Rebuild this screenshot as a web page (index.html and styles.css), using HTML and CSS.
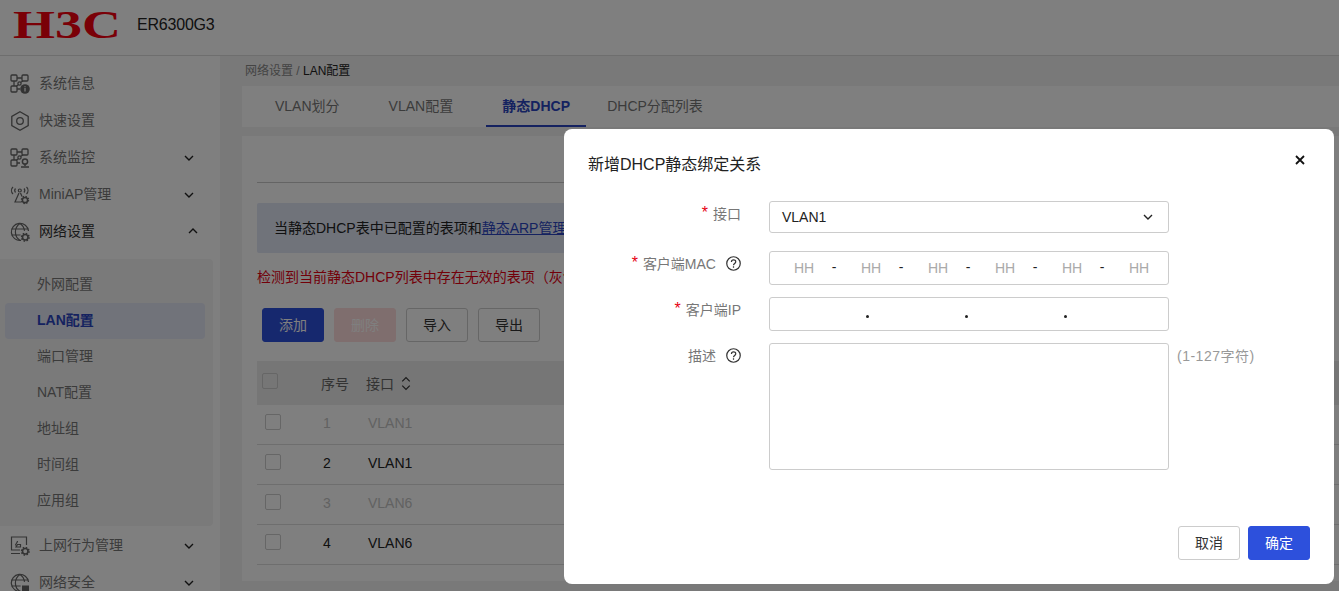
FILE: index.html
```html
<!DOCTYPE html>
<html lang="en">
<head>
  <meta charset="UTF-8" />
  <meta name="viewport" content="width=device-width, initial-scale=1.0" />
  <title>ER6300G3</title>
  <link rel="stylesheet" href="styles.css">
</head>
<body>
  <svg class="defs" width="0" height="0">
    <symbol id="gear" viewBox="0 0 10 10">
      <circle cx="5" cy="5" r="2.9" fill="none" stroke="currentColor" stroke-width="1.7"/>
      <circle cx="5" cy="5" r="4" fill="none" stroke="currentColor" stroke-width="1.6" stroke-dasharray="1.6 1.54"/>
    </symbol>
    <symbol id="nodes" viewBox="0 0 20 20">
      <g fill="none" stroke="currentColor" stroke-width="1.3">
        <rect x="1" y="1" width="6" height="6" rx="1"/>
        <rect x="12" y="1" width="6" height="6" rx="1"/>
        <rect x="1" y="12" width="6" height="6" rx="1"/>
        <circle cx="9.5" cy="9.5" r="1.6"/>
        <path d="M7 4h5M4 7v5M8.3 10.8L6 12.5M10.8 8.3L13 7M7 15h3"/>
      </g>
    </symbol>
    <symbol id="globe" viewBox="0 0 20 20">
      <g fill="none" stroke="currentColor" stroke-width="1.2">
        <path d="M11 18.4A8.6 8.6 0 1 1 18.5 9"/>
        <path d="M10 1.4C6 4 5.4 7 5.4 10s.8 6 4.6 8.4M10 1.4c3 2 4.3 4.5 4.5 7.5M1.6 7h16M1.6 13h9"/>
      </g>
    </symbol>
  </svg>

  <header class="topbar">
    <svg class="logo" width="112" height="50" viewBox="0 0 112 50">
      <text x="1" y="38" textLength="108" lengthAdjust="spacingAndGlyphs">H3C</text>
    </svg>
    <span class="model">ER6300G3</span>
  </header>

  <div class="layout">
    <nav class="sidebar">
      <div class="menu-item">
        <svg class="menu-icon" viewBox="0 0 20 20">
          <use href="#nodes"/>
          <circle cx="15" cy="15" r="4.8" fill="currentColor"/>
          <path d="M15 14v3.4M15 12.2v1" stroke="#fff" stroke-width="1.2"/>
        </svg>
        <span>系统信息</span>
      </div>
      <div class="menu-item">
        <svg class="menu-icon" viewBox="0 0 20 20" fill="none" stroke="currentColor" stroke-width="1.3">
          <path d="M10 .8l8.2 4.6v9.2L10 19.2l-8.2-4.6V5.4z"/>
          <circle cx="10" cy="10" r="3.3"/>
        </svg>
        <span>快速设置</span>
      </div>
      <div class="menu-item">
        <svg class="menu-icon" viewBox="0 0 20 20">
          <use href="#nodes"/>
          <circle cx="15" cy="13.5" r="2.6" fill="none" stroke="currentColor" stroke-width="1.5"/>
          <path d="M15 16v2M11 19h8" stroke="currentColor" stroke-width="1.5"/>
        </svg>
        <span>系统监控</span>
        <svg class="chevron" viewBox="0 0 10 6"><path d="M1 1l4 4 4-4"/></svg>
      </div>
      <div class="menu-item">
        <svg class="menu-icon" viewBox="0 0 20 20" fill="none" stroke="currentColor" stroke-width="1.2">
          <path d="M3 2C1 4 1 7 3 9M5.5 3.5C4.5 4.700 4.500 6.300 5.500 7.500M16.500 2c2 2 2 5 0 7M14 3.500c1 1.200 1 2.800 0 4"/>
          <circle cx="9.800" cy="5.500" r="1.500"/>
          <path d="M9 8L5 17h6M10.500 8l1.500 3.500"/>
          <use href="#gear" x="10.500" y="10.500" width="9" height="9"/>
        </svg>
        <span>MiniAP管理</span>
        <svg class="chevron" viewBox="0 0 10 6"><path d="M1 1l4 4 4-4"/></svg>
      </div>
      <div class="menu-item menu-open">
        <svg class="menu-icon" viewBox="0 0 20 20">
          <use href="#globe"/>
          <use href="#gear" x="10.500" y="10.500" width="9.500" height="9.500"/>
        </svg>
        <span>网络设置</span>
        <svg class="chevron chevron-up" viewBox="0 0 10 6"><path d="M1 5l4-4 4 4"/></svg>
      </div>

      <div class="submenu">
        <div class="sub-item">外网配置</div>
        <div class="sub-item sub-active">LAN配置</div>
        <div class="sub-item">端口管理</div>
        <div class="sub-item">NAT配置</div>
        <div class="sub-item">地址组</div>
        <div class="sub-item">时间组</div>
        <div class="sub-item">应用组</div>
      </div>

      <div class="menu-item">
        <svg class="menu-icon" viewBox="0 0 20 20" fill="none" stroke="currentColor" stroke-width="1.2">
          <path d="M10 14H1.500V1h15v8M1 17.500h9"/>
          <path d="M5.500 9.500c0-2 2-2.500 2-4.500M7.500 8.500h3V11H6z"/>
          <use href="#gear" x="10.500" y="10.500" width="9.500" height="9.500"/>
        </svg>
        <span>上网行为管理</span>
        <svg class="chevron" viewBox="0 0 10 6"><path d="M1 1l4 4 4-4"/></svg>
      </div>
      <div class="menu-item">
        <svg class="menu-icon" viewBox="0 0 20 20">
          <use href="#globe"/>
          <rect x="12" y="12.500" width="7" height="6" fill="currentColor"/>
        </svg>
        <span>网络安全</span>
        <svg class="chevron" viewBox="0 0 10 6"><path d="M1 1l4 4 4-4"/></svg>
      </div>
    </nav>

    <main class="main">
      <div class="breadcrumb">网络设置 / <b>LAN配置</b></div>
      <div class="tabs">
        <div class="tab">VLAN划分</div>
        <div class="tab">VLAN配置</div>
        <div class="tab tab-active">静态DHCP</div>
        <div class="tab">DHCP分配列表</div>
      </div>
      <section class="card">
        <div class="card-line"></div>
        <div class="notice">当静态DHCP表中已配置的表项和<a href="#">静态ARP管理</a></div>
        <p class="warning">检测到当前静态DHCP列表中存在无效的表项（灰色）</p>
        <div class="toolbar">
          <button class="btn btn-primary">添加</button>
          <button class="btn btn-disabled">删除</button>
          <button class="btn">导入</button>
          <button class="btn">导出</button>
        </div>
        <div class="table">
          <div class="table-head">
            <span class="check"></span>
            <span class="col-no">序号</span>
            <span>接口</span>
            <svg class="sort" viewBox="0 0 10 14"><path d="M1.500 5L5 1.500 8.500 5M1.500 9L5 12.500 8.500 9"/></svg>
          </div>
          <div class="table-row row-off"><span class="check"></span><span class="col-no">1</span><span>VLAN1</span></div>
          <div class="table-row"><span class="check"></span><span class="col-no">2</span><span>VLAN1</span></div>
          <div class="table-row row-off"><span class="check"></span><span class="col-no">3</span><span>VLAN6</span></div>
          <div class="table-row"><span class="check"></span><span class="col-no">4</span><span>VLAN6</span></div>
        </div>
      </section>
    </main>
  </div>

  <div class="mask"></div>

  <div class="modal">
    <div class="modal-head">
      <span>新增DHCP静态绑定关系</span>
      <svg class="close" viewBox="0 0 10 10"><path d="M1 1l8 8M9 1l-8 8"/></svg>
    </div>

    <div class="form-row row-select">
      <label class="form-label"><i>*</i>接口</label>
      <div class="field field-select">
        <span>VLAN1</span>
        <svg class="select-arrow" viewBox="0 0 10 6"><path d="M1 1l4 4 4-4"/></svg>
      </div>
    </div>
    <div class="form-row">
      <label class="form-label"><i>*</i>客户端MAC<svg class="help" viewBox="0 0 16 16"><circle cx="8" cy="8" r="7.200"/><path d="M5.800 6.300c0-2.900 4.600-2.900 4.600-.1 0 1.900-2.400 1.700-2.400 3.700M8 10.800v1.700"/></svg></label>
      <div class="field field-mac">
        <span class="hh">HH</span><span class="dash">-</span>
        <span class="hh">HH</span><span class="dash">-</span>
        <span class="hh">HH</span><span class="dash">-</span>
        <span class="hh">HH</span><span class="dash">-</span>
        <span class="hh">HH</span><span class="dash">-</span>
        <span class="hh">HH</span>
      </div>
    </div>
    <div class="form-row">
      <label class="form-label"><i>*</i>客户端IP</label>
      <div class="field field-ip">
        <span class="ip-part"></span><span class="ip-dot"></span>
        <span class="ip-part"></span><span class="ip-dot"></span>
        <span class="ip-part"></span><span class="ip-dot"></span>
      </div>
    </div>
    <div class="form-row">
      <label class="form-label"><span>描述</span><svg class="help" viewBox="0 0 16 16"><circle cx="8" cy="8" r="7.200"/><path d="M5.800 6.300c0-2.900 4.600-2.900 4.600-.1 0 1.900-2.400 1.700-2.400 3.700M8 10.800v1.700"/></svg></label>
      <div class="field field-area"></div>
      <span class="hint">(1-127字符)</span>
    </div>

    <div class="modal-foot">
      <button class="btn">取消</button>
      <button class="btn btn-primary">确定</button>
    </div>
  </div>
</body>
</html>
```

FILE: styles.css
```css
* {
  box-sizing: border-box;
}
html, body {
  height: 591px;
  overflow: hidden;
}
body {
  margin: 0;
  font-family: "Liberation Sans", "Noto Sans CJK SC", sans-serif;
  font-size: 14px;
  color: #333;
  background: #fff;
}
.defs {
  position: absolute;
}
.topbar {
  height: 56px;
  border-bottom: 1px solid #ddd;
  display: flex;
  align-items: center;
  padding-left: 12px;
}
.logo {
  margin-top: -6px;
}
.logo text {
  font-family: "Liberation Serif", serif;
  font-weight: bold;
  font-size: 40px;
  fill: #f5000f;
}
.model {
  margin-left: 13px;
  margin-top: -6px;
  font-size: 16px;
  letter-spacing: -0.2px;
  color: #222;
}
.layout {
  display: flex;
  height: 535px;
}
.sidebar {
  width: 220px;
  flex-shrink: 0;
  padding-top: 9px;
  overflow: hidden;
}
.menu-item {
  height: 37px;
  padding-left: 10px;
  display: flex;
  align-items: center;
  gap: 9px;
  color: #777;
  position: relative;
}
.menu-item span {
  padding-bottom: 3px;
}
.menu-open {
  color: #333;
}
.menu-icon {
  width: 20px;
  height: 20px;
  color: #666;
}
.chevron {
  position: absolute;
  left: 184px;
  top: 16px;
  width: 10px;
  height: 6px;
  fill: none;
  stroke: #222;
  stroke-width: 1.4;
}
.chevron-up {
  left: 188px;
  top: 15px;
}
.submenu {
  width: 213px;
  margin: 9px 0 1px;
  padding: 8px 0 7px;
  background: #f4f4f4;
  border-radius: 0 4px 4px 0;
}
.sub-item {
  height: 36px;
  line-height: 34px;
  padding-left: 32px;
  margin: 0 8px 0 5px;
  color: #777;
}
.sub-active {
  background: #e2e6f4;
  border-radius: 4px;
  color: #2a45c0;
  font-weight: bold;
}
.main {
  flex: 1;
  min-width: 0;
  background: #f2f2f2;
  padding-left: 22px;
}
.breadcrumb {
  height: 30px;
  line-height: 30px;
  margin-left: 3px;
  font-size: 12px;
  color: #888;
}
.breadcrumb b {
  font-weight: normal;
  color: #222;
}
.tabs {
  height: 41px;
  background: #fff;
  display: flex;
  padding-left: 18px;
  gap: 19px;
}
.tab {
  padding: 0 15px;
  line-height: 41px;
  color: #777;
  white-space: nowrap;
}
.tab-active {
  margin-left: -1px;
  margin-right: -13px;
  padding: 0 15px;
  width: 100px;
  text-align: center;
  color: #2a45c0;
  font-weight: bold;
  border-bottom: 2px solid #2a45c0;
}
.card {
  margin-top: 9px;
  height: 445px;
  background: #fff;
  padding-left: 15px;
}
.card-line {
  height: 47px;
  border-bottom: 1px solid #c8c8c8;
  margin-right: 5px;
}
.notice {
  margin: 20px 5px 0 0;
  height: 50px;
  line-height: 50px;
  padding-left: 17px;
  background: #e1e6f5;
  border-radius: 2px;
  color: #222;
}
.notice a {
  color: #2a45c0;
}
.warning {
  margin: 14px 0 0;
  height: 20px;
  line-height: 20px;
  color: #e60012;
  white-space: nowrap;
}
.toolbar {
  margin: 21px 0 0 5px;
  display: flex;
  gap: 10px;
}
.btn {
  width: 62px;
  height: 34px;
  padding: 0 0 2px;
  font: inherit;
  font-size: 14px;
  color: #333;
  background: #fff;
  border: 1px solid #ccc;
  border-radius: 3px;
}
.btn-primary {
  background: #2d50dc;
  border-color: #2d50dc;
  color: #fff;
}
.btn-disabled {
  background: #fedcdc;
  border-color: #fedcdc;
  color: #fff;
}
.table {
  margin-top: 19px;
}
.table-head, .table-row {
  display: flex;
  align-items: center;
}
.table-head {
  height: 44px;
  background: #ececec;
  padding-left: 5px;
  color: #666;
}
.table-head .check {
  margin-top: -4px;
}
.table-head .col-no {
  width: 45px;
  margin-left: 43px;
}
.table-row {
  height: 40px;
  padding: 0 0 3px 8px;
  border-bottom: 1px solid #ddd;
  color: #222;
}
.table-row .check {
  margin-top: -2px;
}
.table-row .col-no {
  width: 45px;
  margin-left: 42px;
}
.row-off {
  color: #c4c4c4;
}
.check {
  width: 16px;
  height: 16px;
  border: 1px solid #ccc;
  border-radius: 2px;
  flex-shrink: 0;
}
.sort {
  width: 12px;
  height: 15px;
  margin-left: 6px;
  fill: none;
  stroke: #333;
  stroke-width: 1.100;
}
.mask {
  position: fixed;
  inset: 0;
  background: rgba(0, 0, 0, 0.5);
}
.modal {
  position: fixed;
  top: 129px;
  left: 564px;
  width: 770px;
  height: 455px;
  background: #fff;
  border-radius: 8px;
  padding: 0 24px 24px;
  display: flex;
  flex-direction: column;
  color: #333;
}
.modal-head {
  height: 72px;
  padding: 26px 5px 0 0;
  font-size: 16px;
  line-height: 20px;
  color: #222;
  display: flex;
  justify-content: space-between;
}
.close {
  width: 10px;
  height: 10px;
  fill: none;
  stroke: #111;
  stroke-width: 1.800;
}
.form-row {
  display: flex;
  align-items: flex-start;
  margin-bottom: 12px;
}
.row-select {
  margin-bottom: 18px;
}
.form-label {
  width: 153px;
  margin-right: 28px;
  flex-shrink: 0;
  display: flex;
  justify-content: flex-end;
  align-items: center;
  height: 24px;
  color: #777;
  white-space: nowrap;
}
.form-label i {
  color: #e60012;
  font-style: normal;
  margin-right: 5px;
  font-size: 16px;
}
.help {
  width: 15px;
  height: 15px;
  margin-left: 10px;
  fill: none;
  stroke: #333;
  stroke-width: 1.300;
}
.field {
  width: 400px;
  height: 34px;
  border: 1px solid #ccc;
  border-radius: 3px;
  display: flex;
  align-items: center;
  color: #222;
}
.field-select {
  height: 32px;
  justify-content: space-between;
  padding: 0 15px 0 12px;
}
.select-arrow {
  width: 10px;
  height: 6px;
  fill: none;
  stroke: #222;
  stroke-width: 1.400;
}
.field-mac {
  padding-left: 12px;
}
.hh {
  width: 44px;
  text-align: center;
  color: #aaa;
}
.dash {
  width: 16px;
  margin-right: 7px;
  text-align: center;
  margin-top: -3px;
}
.ip-part {
  width: 96px;
}
.ip-dot {
  width: 3px;
  height: 3px;
  margin-top: 4px;
  border-radius: 50%;
  background: #222;
}
.field-area {
  height: 127px;
}
.hint {
  margin: 4px 0 0 8px;
  color: #999;
  line-height: 18px;
  letter-spacing: 0.5px;
}
.modal-foot {
  margin-top: auto;
  display: flex;
  justify-content: flex-end;
  gap: 8px;
}
```
